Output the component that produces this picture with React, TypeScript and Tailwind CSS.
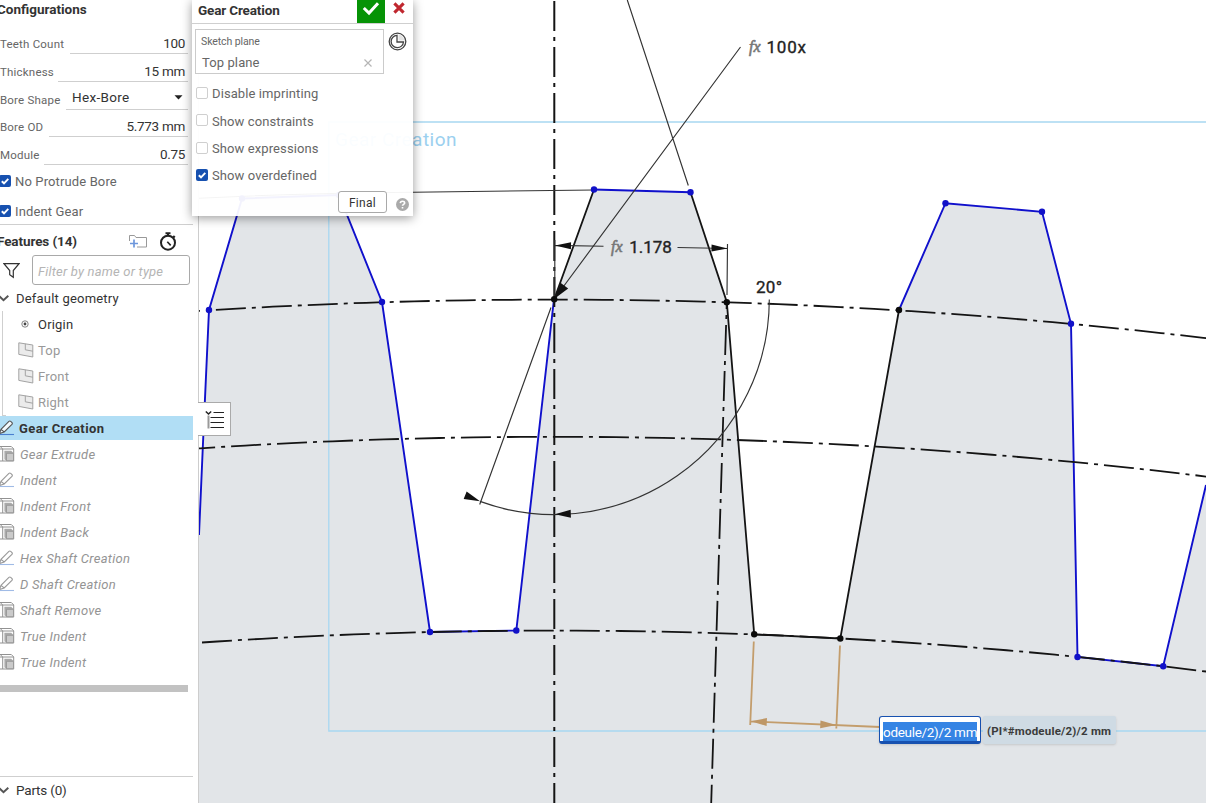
import React from "react";

const DASH = "30 6 4 6";
const BLUE = "#1010cc";
const INK = "#141414";

function Check({ on = false }: { on?: boolean }) {
  return on ? (
    <svg className="h-3 w-3 shrink-0" viewBox="0 0 12 12">
      <rect width="12" height="12" rx="2" fill="#1751b0" />
      <path d="M2.8 6.2 5 8.3 9.3 3.9" fill="none" stroke="#fff" strokeWidth="1.9" />
    </svg>
  ) : (
    <span className="h-3 w-3 shrink-0 rounded-[2px] border border-[#cfcfcf] bg-white" />
  );
}

function Field({ label, value, row, line, select = false }: { label: string; value: string; row: string; line: string; select?: boolean }) {
  return (
    <div className={`flex w-[188px] items-end justify-between ${row}`}>
      <span className="whitespace-nowrap pb-[3px] text-[11.5px] leading-[14px] tracking-[0.2px] text-[#666]">{label}</span>
      <span className={`flex h-full border-b border-[#cfcfcf] leading-[16px] text-[#333] ${line} ${select ? "items-start justify-between pl-[6px] pr-[5px] pt-[7px] text-[13.5px] tracking-[0.3px]" : "items-end justify-end pb-[2px] pr-[3px] text-[13.5px] tracking-[-0.3px]"}`}>
        {value}
        {select && (
          <svg className="mt-[6px] h-[5px] w-[9px]" viewBox="0 0 9 5"><path d="M0.5 0.3h8L4.5 4.6z" fill="#222" /></svg>
        )}
      </span>
    </div>
  );
}

function Pencil({ active = false }: { active?: boolean }) {
  return (
    <svg className="h-[18px] w-[15px] shrink-0" viewBox="0 0 15 18">
      <path d="M-0.5 14.6 1 10.4 8.9 2.4Q9.8 1.6 10.7 2.4L12 3.7Q12.7 4.5 11.9 5.4L4.2 13ZM1 10.4 4.2 13" fill={active ? "#f4fafd" : "#fff"} stroke={active ? "#555" : "#999"} strokeWidth="1.1" />
      <path d="M-1 15.5h15" stroke={active ? "#4a7fd0" : "#a0bbe6"} strokeWidth="1.1" />
    </svg>
  );
}

function Extrude() {
  return (
    <svg className="h-[18px] w-[15px] shrink-0" viewBox="0 0 15 18">
      <path d="M0 1.5h11.3l2.4 2.4v12.1H0M0 4h2.7M2.7 16V4h11M2.7 4 0.5 1.8" fill="none" stroke="#929292" strokeWidth="1" />
      <path d="M4.4 5.8h6.8l2.4 2.2v8H6.5l-2.1-1.8z" fill="#aaa" />
      <path d="M6.5 8.3h7v7.4h-7z" fill="#cacaca" stroke="#929292" strokeWidth="0.8" />
    </svg>
  );
}

function Plane() {
  return (
    <svg className="h-4 w-4 shrink-0" viewBox="0 0 16 16">
      <path d="M0.8 0.8 14.8 3v12L0.8 12.4z" fill="#ebebeb" stroke="#a3a3a3" />
      <path d="M7.3 1.8v6l7.5 1.4" fill="none" stroke="#a3a3a3" />
    </svg>
  );
}

function Chevron() {
  return (
    <svg className="-ml-px h-[7px] w-[10px] shrink-0" viewBox="0 0 10 7"><path d="M0 1 4.5 5.2 9.3 0.8" fill="none" stroke="#555" strokeWidth="2" /></svg>
  );
}

const features: [string, boolean][] = [
  ["Gear Extrude", false],
  ["Indent", true],
  ["Indent Front", false],
  ["Indent Back", false],
  ["Hex Shaft Creation", true],
  ["D Shaft Creation", true],
  ["Shaft Remove", false],
  ["True Indent", false],
  ["True Indent", false],
];

function Sidebar() {
  return (
    <aside className="flex h-full w-[199px] shrink-0 flex-col overflow-hidden border-r border-[#cdcdcd] bg-white">
      <h2 className="-ml-[3px] h-[26px] whitespace-nowrap pt-px text-[13.5px] font-bold leading-[17px] text-[#333]">Configurations</h2>
      <Field label="Teeth Count" value="100" row="h-[28px]" line="w-[118px]" />
      <Field label="Thickness" value="15 mm" row="h-[28px]" line="w-[130px]" />
      <Field label="Bore Shape" value="Hex-Bore" row="h-[28px]" line="w-[122px]" select />
      <Field label="Bore OD" value="5.773 mm" row="h-[27px]" line="w-[139px]" />
      <Field label="Module" value="0.75" row="h-[28px]" line="w-[144px]" />
      <div className="-ml-px flex h-[32px] items-center gap-1 text-[13px] tracking-[0.13px] text-[#666]"><Check on /><span className="pt-px">No Protrude Bore</span></div>
      <div className="-ml-px flex h-[27px] items-center gap-1 text-[13px] tracking-[0.13px] text-[#666]"><Check on /><span className="pt-[2px]">Indent Gear</span></div>
      <div className="flex h-[31px] w-[193px] items-center border-t border-[#cfcfcf] pt-[3px]">
        <span className="-ml-[3px] w-[132px] whitespace-nowrap text-[13.5px] font-bold tracking-[-0.1px] text-[#333]">Features (14)</span>
        <svg className="h-[15px] w-[18px]" viewBox="0 0 18 15">
          <path d="M0.5 7V1.5h5l1.5 2h10.5v9.5H8" fill="none" stroke="#999" />
          <path d="M5 5.5v8M1 9.5h8" stroke="#6d97dc" strokeWidth="1.7" />
        </svg>
        <svg className="ml-[12px] h-[19px] w-[18px]" viewBox="0 0 18 19">
          <circle cx="9" cy="10.7" r="7" fill="none" stroke="#222" strokeWidth="2" />
          <path d="M6.5 1.2h5M9 1.2v3M14.2 4l1.6 1.5" stroke="#222" strokeWidth="2" />
          <path d="M8.3 9.8l3.4 3.6" stroke="#222" strokeWidth="1.6" />
        </svg>
      </div>
      <div className="flex h-[30px] items-center">
        <svg className="ml-[3px] mr-[12px] h-[17px] w-[17px]" viewBox="0 0 17 17"><path d="M1 1.7h15L10.3 8.5v6.8L6.7 12.8V8.5z" fill="none" stroke="#333" strokeWidth="1.2" /></svg>
        <div className="flex h-[30px] w-[158px] items-center rounded-[3px] border border-[#a9a9a9] pl-[5px] pt-[3px] text-[13px] italic tracking-[0.2px] text-[#b5b5b5]">Filter by name or type</div>
      </div>
      <div className="flex h-[26px] items-center text-[13px] tracking-[0.2px] text-[#333]"><Chevron /><span className="ml-[7px] pt-[2px]">Default geometry</span></div>
      <div className="ml-[2px] w-[4px] border-b border-l border-[#cfcfcf] text-[13px] tracking-[0.2px]">
        <div className="flex h-[26px] w-[150px] items-center text-[#333]">
          <svg className="ml-[18px] mr-[9px] h-[8px] w-[8px]" viewBox="0 0 8 8"><circle cx="4" cy="4" r="3.2" fill="none" stroke="#777" strokeWidth="0.9" /><circle cx="4" cy="4" r="1.4" fill="#444" /></svg><span className="pt-[2px]">Origin</span>
        </div>
        {["Top", "Front", "Right"].map((n) => (
          <div key={n} className="flex h-[26px] w-[150px] items-center gap-[4px] pl-[15px] text-[#999]"><Plane /><span className="pt-[2px]">{n}</span></div>
        ))}
      </div>
      <div className="flex h-[24px] w-[193px] items-center gap-[4px] bg-[#b1def5] text-[13px] font-bold tracking-[0.38px] text-[#333]"><Pencil active /><span className="pt-[2px]">Gear Creation</span></div>
      <div className="pt-px">
        {features.map(([name, sketch], i) => (
          <div key={i} className="flex h-[26px] items-center gap-[5px] text-[13px] italic tracking-[0.27px] text-[#949494]">{sketch ? <Pencil /> : <Extrude />}<span className="pt-[2px]">{name}</span></div>
        ))}
      </div>
      <div className="mt-[10px] h-[7px] w-[188px] shrink-0 bg-[#c2c2c2]" />
      <div className="mt-auto flex h-[27px] w-[193px] shrink-0 items-center border-t border-[#cfcfcf] text-[13.5px] tracking-[-0.2px] text-[#333]"><Chevron /><span className="ml-[7px]">Parts (0)</span></div>
    </aside>
  );
}

function Arrow({ x, y, angle, fill = "#111", half = 3.5 }: { x: number; y: number; angle: number; fill?: string; half?: number }) {
  return <path d={`M0 0L-16 ${-half}V${half}Z`} fill={fill} transform={`translate(${x} ${y}) rotate(${angle})`} />;
}

const bluePoints = [[209, 310], [242, 198.5], [339, 195], [382, 302], [430, 632], [516.3, 630.5], [594, 189.5], [690.5, 192.2], [945.5, 203.2], [1042, 211.8], [1071, 323.8], [1077.5, 657], [1163.2, 666.3]];
const blackPoints = [[554.2, 299.3], [726.8, 302.2], [754.2, 634.3], [840.3, 638.5], [899, 310]];

function Drawing() {
  return (
    <svg className="block h-full w-full" viewBox="199 0 1007 803" fontFamily="Roboto, sans-serif">
      <path d="M199 535 209 310 242 198.5 339 195 382 302 430 632 516.3 630.5 554 299 594 189.5 690.5 192.2 726.8 302 754 634.3 840.3 638.5 899 310 945.5 203.2 1042 211.8 1071 323.8 1077.5 657 1163.2 666.3 1206 485V803H199Z" fill="#e2e5e8" />
      <path d="M1206 122H328.8V731H1206" fill="none" stroke="#a8d8f1" strokeWidth="1.3" />
      <text x="335" y="146" fontSize="19" fill="#9bd0ef" textLength="121.5">Gear Creation</text>
      <g fill="none" stroke={BLUE} strokeWidth="1.9">
        <path d="M199 535 203.3 436 209 310 242 198.5 339 195 382 302 430 632 516.3 630.5 554 299" />
        <path d="M594 189.5 690.5 192.2M899 310 945.5 203.2 1042 211.8 1071 323.8 1077.5 657 1163.2 666.3 1206 485" />
      </g>
      <g fill="none" stroke={INK} strokeWidth="1.8">
        <path d="M554.2 299.3 594 189.5M690.5 192.2 726.8 302 754.2 634.3 840.3 638.5 899 310" />
        <path d="M170 312.9A5540 5540 0 0 1 1230 341.1" strokeDasharray={DASH} />
        <path d="M185.2 449.3A5403 5403 0 0 1 1230 479.5" strokeDasharray={DASH} />
        <path d="M202 642.5A5209 5209 0 0 1 1230 674.6" strokeDasharray={DASH} />
        <path d="M554.3-45V803" strokeDasharray={DASH} strokeWidth="2" />
        <path d="M726.8 302 711.2 803" strokeDasharray={DASH} strokeDashoffset="23" />
      </g>
      <g fill="none" stroke="#333" strokeWidth="1.15">
        <path d="M199 198.3Q300 193 413 192.2L594 190" />
        <path d="M627.3 0 688.3 185.5M740.5 47 555 298M551 307.5 479.7 504.5" />
        <path d="M769.3 299.5A215.2 215.2 0 0 1 480 501.4" />
        <path d="M555 245.4 603.5 246.3M677.5 247.5 727.5 248.5M727.5 244 727 295M554.8 240V299" />
      </g>
      <Arrow x={555} y={245.4} angle={181} />
      <Arrow x={727.5} y={248.4} angle={1} />
      <Arrow x={554.8} y={298.5} angle={126.5} half={4.8} />
      <Arrow x={480} y={501.3} angle={22} half={4} />
      <Arrow x={554.8} y={514.3} angle={178} half={4} />
      <g fill="#1111c8">{bluePoints.map(([x, y]) => <circle key={x} cx={x} cy={y} r="3.2" />)}</g>
      <g fill="#0b0b0b">{blackPoints.map(([x, y]) => <circle key={x} cx={x} cy={y} r="3.2" />)}</g>
      <g fill="none" stroke="#c39d6c" strokeWidth="1.8">
        <path d="M753.8 641.5 750.2 725M840 645.5 836.3 728.5M751 721.3 880 727" />
      </g>
      <Arrow x={750.8} y={721.3} angle={182.5} fill="#be9766" half={3.9} />
      <Arrow x={836.3} y={725} angle={2.5} fill="#be9766" half={3.9} />
      <g fill="#222" stroke="#222" strokeWidth="0.35" fontSize="17">
        <text x="766.5" y="53" textLength="39.5">100x</text>
        <text x="629.3" y="253" textLength="42.5">1.178</text>
        <text x="756" y="292.8" textLength="26">20°</text>
      </g>
      <g fill="#777" stroke="#777" strokeWidth="0.6" fontSize="16" fontStyle="italic" fontFamily="Liberation Serif, serif">
        <text x="749" y="51.5" textLength="11.5">fx</text>
        <text x="611" y="251.5" textLength="11.5">fx</text>
      </g>
    </svg>
  );
}

function SketchDialog() {
  return (
    <section className="absolute left-[192px] top-0 flex h-[216px] w-[221px] flex-col bg-white/95 shadow-[0_2px_10px_rgba(0,0,0,0.4)]">
      <header className="flex h-[24px] shrink-0 items-start border-b border-[#cfcfcf] bg-white">
        <h3 className="w-[165px] pl-[6px] pt-[2px] text-[13.5px] font-bold leading-[17px] tracking-[-0.15px] text-[#333]">Gear Creation</h3>
        <div className="flex h-[23px] w-[28px] justify-center bg-[#069306]">
          <svg className="mt-px h-[15px] w-[18px]" viewBox="0 0 18 15"><path d="M1.8 7 7 12 16 2.2" fill="none" stroke="#fff" strokeWidth="3" /></svg>
        </div>
        <svg className="ml-[8px] mt-[2px] h-[12px] w-[12px]" viewBox="0 0 12 12"><path d="M1.4 1.4 10.6 10.6M10.6 1.4 1.4 10.6" stroke="#c0272f" strokeWidth="3.1" /></svg>
      </header>
      <div className="flex px-[3px] pt-[5px]">
        <div className="h-[45px] w-[189px] border border-[#cbcbcb] bg-white pl-[6px] text-[#666]">
          <div className="-ml-px pt-[5px] text-[10.5px] leading-[14px] tracking-[-0.1px]">Sketch plane</div>
          <div className="flex items-center justify-between pr-[11px] pt-[5px] text-[13px] leading-[17px] tracking-[0.1px]">
            Top plane
            <svg className="h-[8px] w-[8px]" viewBox="0 0 8 8"><path d="M0.5 0.5 7.5 7.5M7.5 0.5 0.5 7.5" stroke="#b5b5b5" strokeWidth="1.2" /></svg>
          </div>
        </div>
        <svg className="ml-[4px] mt-[3px] h-[19px] w-[19px]" viewBox="0 0 19 19">
          <circle cx="9.5" cy="9.5" r="8.3" fill="#fff" stroke="#444" strokeWidth="1.3" />
          <path d="M9 3.3A6.2 6.2 0 1 0 15.5 10H9z" fill="#fff" stroke="#444" strokeWidth="1.3" />
          <path d="M10.5 2.5A7 7 0 0 1 16.3 8.5h-5.8z" fill="#e3e3e3" />
        </svg>
      </div>
      <div className="flex flex-col pl-[4px] pt-[5px] text-[13px] tracking-[0.1px] text-[#666]">
        <label className="flex h-[27px] items-center gap-[4px]"><Check /><span className="pt-[3px]">Disable imprinting</span></label>
        <label className="flex h-[28px] items-center gap-[4px]"><Check /><span className="pt-[4px]">Show constraints</span></label>
        <label className="flex h-[27px] items-center gap-[4px]"><Check /><span className="pt-[3px]">Show expressions</span></label>
        <label className="flex h-[27px] items-center gap-[4px]"><Check on /><span className="pt-[3px]">Show overdefined</span></label>
      </div>
      <div className="mt-[3px] flex items-start justify-end pr-[4px]">
        <button className="mr-[9px] h-[22px] w-[49px] rounded-[3px] border border-[#a9a9a9] bg-white text-[12px] leading-[22px] tracking-[0.3px] text-[#333]">Final</button>
        <svg className="mt-[7px] h-[13px] w-[13px]" viewBox="0 0 12 12">
          <circle cx="6" cy="6" r="6" fill="#aaa" />
          <path d="M4 4.7Q4.1 3 6 3T8 4.6C8 5.9 6 5.8 6 7.2M6 8.2v1.5" fill="none" stroke="#fff" strokeWidth="1.5" />
        </svg>
      </div>
    </section>
  );
}

export default function App() {
  return (
    <div className="relative flex h-[803px] w-[1206px] overflow-hidden bg-white font-['Roboto',sans-serif]">
      <Sidebar />
      <main className="h-full min-w-0 flex-1"><Drawing /></main>
      <div className="absolute left-[198px] top-[402px] flex h-[34px] w-[33px] items-center justify-center border border-l-0 border-[#aaa] bg-white">
        <svg className="h-[19px] w-[19px]" viewBox="0 0 19 19">
          <path d="M0.8 1.5 3.5 4 6.2 1.5" fill="none" stroke="#222" strokeWidth="1.5" />
          <path d="M3.5 5.5v13" stroke="#999" strokeWidth="2" />
          <path d="M8.5 2.5H19M5.5 7.5H19M5.5 12.5H19M5.5 17.5H19" stroke="#222" strokeWidth="1.2" />
        </svg>
      </div>
      <SketchDialog />
      <div className="absolute left-[879px] top-[716px] flex h-[28px]">
        <div className="flex h-[28px] w-[102px] items-end rounded-[3px] border border-b-[3px] border-[#1751b0] bg-white px-[3px] shadow">
          <span className="h-[19px] w-[94px] whitespace-nowrap bg-[#3584e4] text-[13.5px] leading-[21px] tracking-[-0.3px] text-white">odeule/2)/2 mm</span>
        </div>
        <div className="ml-[2px] flex h-[28px] w-[133px] items-center whitespace-nowrap rounded-[2px] bg-[#cfdbe4] pl-[4px] pt-[3px] text-[11.5px] font-bold tracking-[0.2px] text-[#3b3b3b] shadow-sm">(PI*#modeule/2)/2 mm</div>
      </div>
    </div>
  );
}
